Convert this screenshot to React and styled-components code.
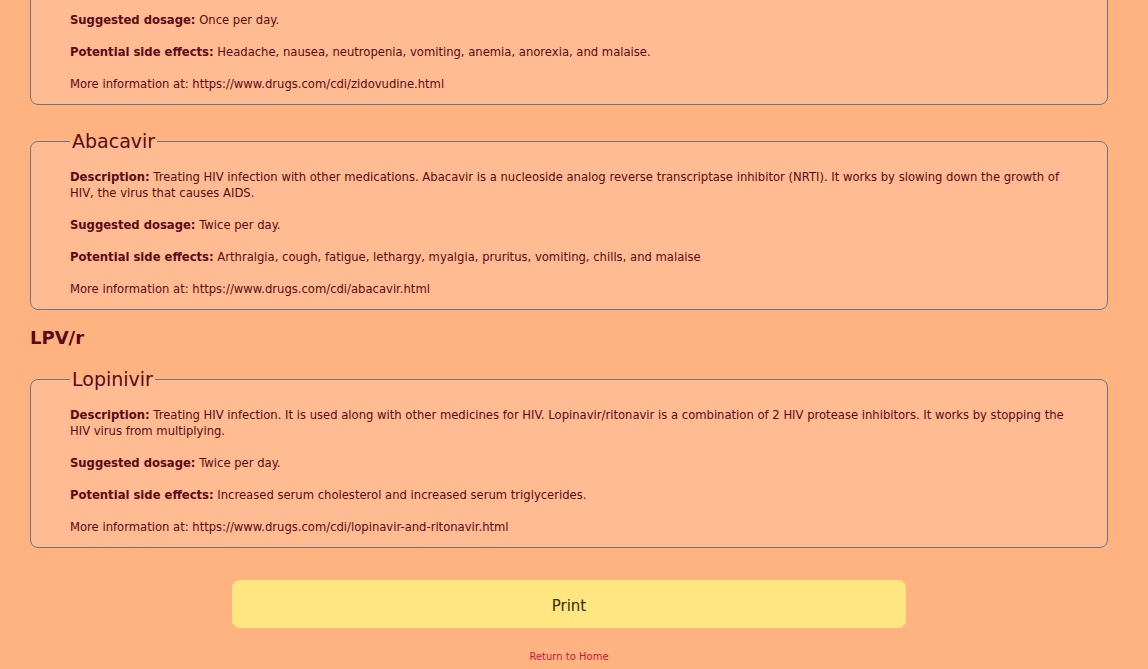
import React from "react";
import styled, { createGlobalStyle } from "styled-components";

const Global = createGlobalStyle`
  html, body { margin: 0; padding: 0; }
  body {
    background: #ffb380;
    font-family: "DejaVu Sans", Verdana, sans-serif;
    color: #5a0a18;
  }
`;

const Page = styled.div`
  padding: 0 40px 7px 30px;
  margin-top: ${(p) => p.$offset}px;
`;

const Card = styled.fieldset`
  margin: 0;
  padding: 2px 39px 12px 39px;
  background: #ffbb91;
  border: 1px solid #6b7585;
  border-radius: 8px;
  & + & { margin-top: 24px; }
`;

const Legend = styled.legend`
  font-size: 19px;
  line-height: 24px;
  padding: 0 2px;
  color: #5a0a18;
`;

const Para = styled.p`
  margin: 16px 0 0 0;
  font-size: 11.6px;
  line-height: 16px;
  &:first-of-type { margin-top: 14px; }
`;

const Label = styled.b`
  font-weight: bold;
`;

const Group = styled.h3`
  margin: 17px 0 18px 0;
  font-size: 18px;
  line-height: 22px;
  font-weight: bold;
`;

const Actions = styled.div`
  display: flex;
  flex-direction: column;
  align-items: center;
  padding-top: 32px;
`;

const PrintButton = styled.button`
  width: 674px;
  height: 48px;
  padding: 3px 0 0 0;
  border: none;
  border-radius: 8px;
  background: #ffe680;
  color: #3b2a0c;
  font-family: "DejaVu Sans", Verdana, sans-serif;
  font-size: 15px;
  cursor: pointer;
`;

const HomeLink = styled.a`
  margin-top: 22px;
  font-size: 10px;
  line-height: 13px;
  color: #c8163c;
  text-decoration: none;
`;

const drugs = [
  {
    name: "Zidovudine",
    description:
      "Treating HIV infection with other medications. Zidovudine is a nucleoside reverse transcriptase inhibitor (NRTI).",
    dosage: "Once per day.",
    effects: "Headache, nausea, neutropenia, vomiting, anemia, anorexia, and malaise.",
    url: "https://www.drugs.com/cdi/zidovudine.html",
  },
  {
    name: "Abacavir",
    description:
      "Treating HIV infection with other medications. Abacavir is a nucleoside analog reverse transcriptase inhibitor (NRTI). It works by slowing down the growth of HIV, the virus that causes AIDS.",
    dosage: "Twice per day.",
    effects: "Arthralgia, cough, fatigue, lethargy, myalgia, pruritus, vomiting, chills, and malaise",
    url: "https://www.drugs.com/cdi/abacavir.html",
  },
];

const lpv = [
  {
    name: "Lopinivir",
    description:
      "Treating HIV infection. It is used along with other medicines for HIV. Lopinavir/ritonavir is a combination of 2 HIV protease inhibitors. It works by stopping the HIV virus from multiplying.",
    dosage: "Twice per day.",
    effects: "Increased serum cholesterol and increased serum triglycerides.",
    url: "https://www.drugs.com/cdi/lopinavir-and-ritonavir.html",
  },
];

function DrugCard({ d }) {
  return (
    <Card>
      <Legend>{d.name}</Legend>
      <Para>
        <Label>Description:</Label> {d.description}
      </Para>
      <Para>
        <Label>Suggested dosage:</Label> {d.dosage}
      </Para>
      <Para>
        <Label>Potential side effects:</Label> {d.effects}
      </Para>
      <Para>More information at: {d.url}</Para>
    </Card>
  );
}

export default function App() {
  return (
    <>
      <Global />
      <Page $offset={-60}>
        {drugs.map((d) => (
          <DrugCard key={d.name} d={d} />
        ))}
        <Group>LPV/r</Group>
        {lpv.map((d) => (
          <DrugCard key={d.name} d={d} />
        ))}
        <Actions>
          <PrintButton>Print</PrintButton>
          <HomeLink href="#">Return to Home</HomeLink>
        </Actions>
      </Page>
    </>
  );
}
